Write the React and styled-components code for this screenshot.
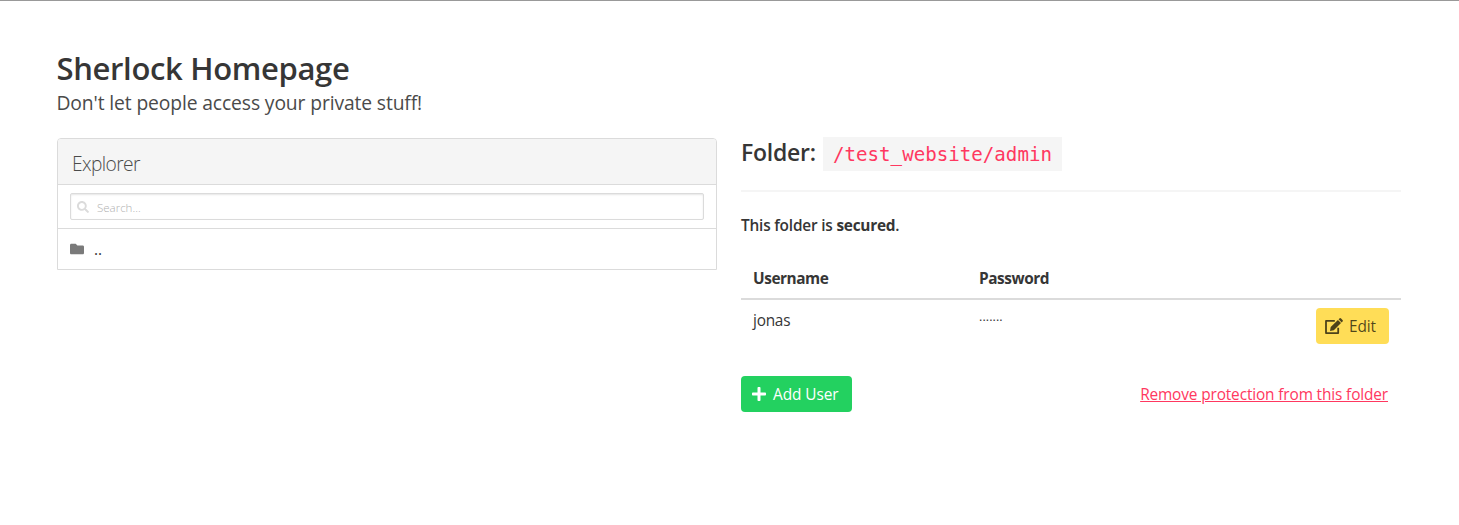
import React from "react";
import styled, { createGlobalStyle } from "styled-components";
import { FaFolder, FaPlus, FaSearch } from "react-icons/fa";

const GlobalStyle = createGlobalStyle`
  *, *::before, *::after { box-sizing: border-box; }
  body {
    margin: 0;
    background: #fff;
    color: #4a4a4a;
    font-family: "Open Sans", "Noto Sans", sans-serif;
    font-size: 15.4px;
    letter-spacing: -0.13px;
  }
  h1, h2, h3, p { margin: 0; }
`;

const Page = styled.main`
  min-height: 525px;
  border-top: 1px solid #999;
  padding: 48px 58px 0 56.5px;
`;

const Title = styled.h1`
  height: 40px;
  color: #363636;
  font-size: 31px;
  line-height: 38px;
  font-weight: 600;
  white-space: nowrap;
  letter-spacing: -0.34px;
`;

const Subtitle = styled.p`
  font-size: 19.3px;
  line-height: 27px;
  letter-spacing: -0.12px;
  white-space: nowrap;
`;

const Columns = styled.div`
  display: grid;
  grid-template-columns: 660px 660px;
  column-gap: 24px;
  align-items: start;
  margin: 21px 0 0 0.5px;
`;

const Panel = styled.section`
  margin-top: 1px;
  border: 1px solid #dbdbdb;
  border-radius: 4px 4px 0 0;
`;

const PanelHeading = styled.h2`
  height: 46px;
  padding: 0 14px;
  background: #f5f5f5;
  border-bottom: 1px solid #dbdbdb;
  border-radius: 3px 3px 0 0;
  font-size: 19.2px;
  font-weight: 300;
  letter-spacing: -0.6px;
  line-height: 49px;
`;

const SearchBlock = styled.div`
  height: 44px;
  padding: 8px 12px;
  border-bottom: 1px solid #dbdbdb;
`;

const SearchField = styled.label`
  display: flex;
  align-items: center;
  gap: 8px;
  height: 27px;
  padding: 0 6px;
  border: 1px solid #dbdbdb;
  border-radius: 2px;
  box-shadow: inset 0 1px 2px rgba(10, 10, 10, 0.1);
  color: #dbdbdb;

  svg { width: 12px; height: 12px; flex: none; }
`;

const SearchInput = styled.input`
  flex: 1;
  min-width: 0;
  padding: 2px 0 0;
  border: 0;
  outline: 0;
  background: transparent;
  font: 300 11.5px "Open Sans", sans-serif;

  &::placeholder { color: #b0b0b0; opacity: 1; }
`;

const FolderRow = styled.div`
  display: flex;
  align-items: center;
  gap: 10px;
  height: 40px;
  padding: 0 12px;
  color: #363636;

  svg { width: 14px; height: 14px; color: #7a7a7a; }
`;

const FolderTitle = styled.h2`
  display: flex;
  justify-content: space-between;
  width: 321px;
  height: 34px;
  color: #363636;
  font-size: 23px;
  font-weight: 600;
  letter-spacing: -0.25px;
  line-height: 31px;
  white-space: nowrap;
`;

const Code = styled.code`
  height: 34px;
  width: 239px;
  padding: 0 10px;
  background: #f5f5f5;
  color: #ff3860;
  font-family: "DejaVu Sans Mono", monospace;
  font-size: 19.15px;
  font-weight: 400;
  letter-spacing: 0;
  line-height: 36px;
`;

const Rule = styled.hr`
  height: 2px;
  margin: 19px 0 21px;
  border: 0;
  background: #f5f5f5;
`;

const Status = styled.p`
  height: 24px;
  color: #363636;
  font-weight: 600;
  letter-spacing: -0.2px;
  line-height: 26px;

  strong { font-weight: 700; letter-spacing: -0.25px; }
`;

const Users = styled.div`
  margin-top: 29px;
`;

const UserRow = styled.div`
  display: grid;
  grid-template-columns: 226px 1fr auto;
  padding: ${(p) => (p.$head ? "0 12px" : "8px 12px 0")};
  height: ${(p) => (p.$head ? "34px" : "76px")};
  border-bottom: ${(p) => (p.$head ? "2px solid #dbdbdb" : "0")};
  color: #363636;
  font-weight: ${(p) => (p.$head ? 700 : 400)};
  letter-spacing: ${(p) => (p.$head ? "-0.45px" : "-0.25px")};
  line-height: 26px;
`;

const Dots = styled.span`
  font-size: 12.5px;
  letter-spacing: 0.1px;
  line-height: 26px;
`;

const Button = styled.button`
  display: flex;
  align-items: center;
  gap: ${(p) => p.$gap};
  width: ${(p) => p.$width};
  height: 36px;
  padding: 0 0 0 ${(p) => p.$inset};
  border: 0;
  border-radius: 4px;
  background: ${(p) => p.$bg};
  color: ${(p) => p.$fg};
  font: 400 15.4px/24px "Open Sans", sans-serif;
  letter-spacing: -0.08px;
  white-space: nowrap;

  svg { width: ${(p) => p.$icon}; height: 16px; flex: none; }
  span { padding-top: 2px; }
`;

const Actions = styled.div`
  display: flex;
  align-items: center;
  justify-content: space-between;
  padding-right: 13px;
`;

const RemoveLink = styled.a`
  padding-top: 2px;
  color: #ff3860;
  line-height: 24px;
  text-decoration: underline;
`;

function EditIcon() {
  return (
    <svg viewBox="0 0 18 16" fill="none" aria-hidden="true">
      <path d="M9.8 2.9H1v12.2h12.2V9.8" stroke="currentColor" strokeWidth="1.8" strokeLinejoin="round" />
      <path
        d="M5 12.9l.7-3.8 7.2-7.1 3.1 3.1-7.2 7.1zM13.6 1.3l.8-.8a1.2 1.2 0 0 1 1.7 0l1.4 1.4a1.2 1.2 0 0 1 0 1.7l-.8.8z"
        fill="currentColor"
      />
    </svg>
  );
}

export default function App() {
  return (
    <>
      <GlobalStyle />
      <Page>
        <Title>Sherlock Homepage</Title>
        <Subtitle>Don't let people access your private stuff!</Subtitle>
        <Columns>
          <Panel>
            <PanelHeading>Explorer</PanelHeading>
            <SearchBlock>
              <SearchField>
                <FaSearch />
                <SearchInput placeholder="Search..." />
              </SearchField>
            </SearchBlock>
            <FolderRow>
              <FaFolder />
              <span>..</span>
            </FolderRow>
          </Panel>
          <section>
            <FolderTitle>
              <span>Folder:</span>
              <Code>/test_website/admin</Code>
            </FolderTitle>
            <Rule />
            <Status>
              This folder is <strong>secured</strong>.
            </Status>
            <Users>
              <UserRow $head>
                <span>Username</span>
                <span>Password</span>
              </UserRow>
              <UserRow>
                <span>jonas</span>
                <Dots>·······</Dots>
                <Button $bg="#ffdd57" $fg="rgba(0,0,0,.7)" $width="73px" $inset="9px" $gap="6px" $icon="18px">
                  <EditIcon />
                  <span>Edit</span>
                </Button>
              </UserRow>
            </Users>
            <Actions>
              <Button $bg="#23d160" $fg="#fff" $width="111px" $inset="10px" $gap="6px" $icon="16px">
                <FaPlus />
                <span>Add User</span>
              </Button>
              <RemoveLink href="#">Remove protection from this folder</RemoveLink>
            </Actions>
          </section>
        </Columns>
      </Page>
    </>
  );
}
